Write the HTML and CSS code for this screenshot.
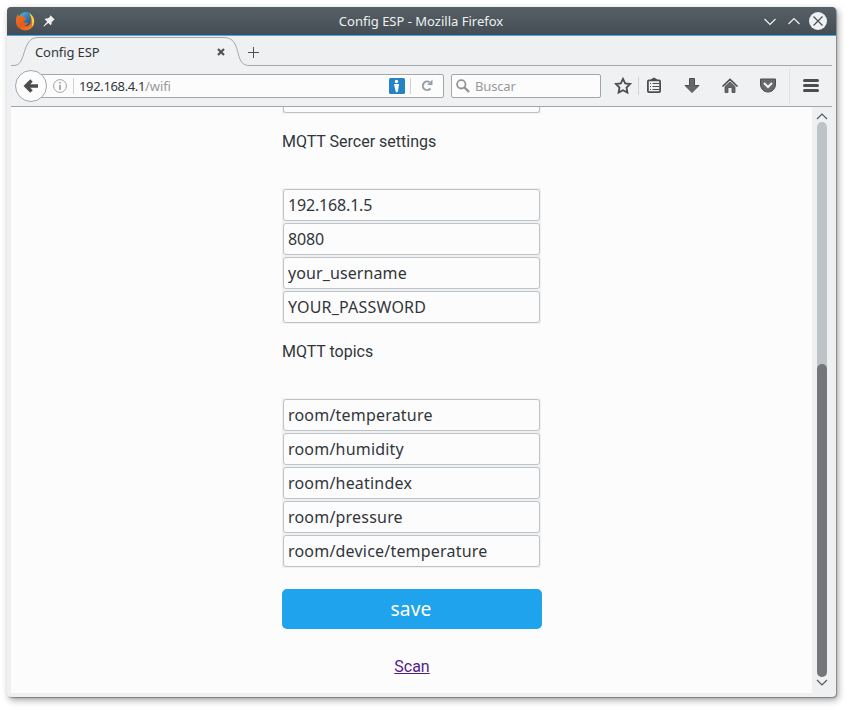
FILE: index.html
```html
<!DOCTYPE html>
<html lang="en">
<head>
<meta charset="utf-8">
<title>Config ESP</title>
<link rel="stylesheet" href="styles.css">
</head>
<body>
<div class="window">
  <header class="titlebar">
    <svg class="firefox" width="20" height="20" viewBox="0 0 20 20">
      <defs>
        <linearGradient id="fox" x1="0" y1="0" x2="1" y2="1"><stop offset="0" stop-color="#e77a25"/><stop offset=".5" stop-color="#e9581c"/><stop offset="1" stop-color="#ee8b20"/></linearGradient>
        <linearGradient id="globe" x1="0" y1="0" x2="1" y2="1"><stop offset="0" stop-color="#52bde9"/><stop offset="1" stop-color="#153568"/></linearGradient>
      </defs>
      <circle cx="11" cy="9.2" r="8.2" fill="url(#globe)"/>
      <path d="M2.5 3.2 4.2 5.6Q5.5 4.6 7 5L9 4.3 8.8 6.5 11 7.6 10.6 8.8 8.4 9.7Q8.6 12 11 12.1L13.5 11.7Q12 14.5 9.2 14.3 13.5 16.8 15.6 12 16.8 8 14.7 3.2 19.8 6.5 19.2 11.4 18.1 18.8 10.3 19.4 2.5 19.2 1 12 .4 7 2.5 3.2Z" fill="url(#fox)"/>
      <path d="M14.4 2.2Q19.5 5.2 19.2 10.8 18.8 14.2 16.8 16.2 18.2 9 14.4 2.2Z" fill="#fbcf3d"/>
    </svg>
    <svg class="pin" width="12" height="12" viewBox="0 0 12 12"><path d="M7.500.3 11.700 4.500 10.500 5.300 8.600 7.200Q9 9.200 7.900 10.300L5.300 7.900 1 11.600.4 11 4.200 6.800 1.700 4.300Q3 3 4.800 3.400L6.900 1.700Z" fill="#eff0f1"/></svg>
    <span class="title">Config ESP - Mozilla Firefox</span>
    <svg class="controls" width="64" height="20" viewBox="0 0 64 20" fill="none" stroke="#eff0f1" stroke-width="1.2">
      <path d="M.5 8 6 13.500 11.500 8M24.500 13 30 7.500 35.500 13"/>
      <circle cx="54" cy="10" r="9" fill="#eff0f1" stroke="none"/>
      <path d="M49.500 5.500 58.500 14.500M58.500 5.500 49.500 14.500" stroke="#475057"/>
    </svg>
  </header>
  <div class="tabs">
    <svg class="tab-shape" width="821" height="30" viewBox="0 0 821 30">
      <path d="M0 29.500H3C16 29.500 10 1.500 27 1.500H213C232 1.500 222 29.500 238 29.500H821V30H0Z" fill="#f0f1f3"/>
      <path d="M0 29.500H3C16 29.500 10 1.500 27 1.500H213C232 1.500 222 29.500 238 29.500H821" fill="none" stroke="#a3a7aa"/>
    </svg>
    <span class="tab-name">Config ESP</span>
    <svg class="tab-close" width="8" height="8" viewBox="0 0 8 8"><path d="M1 1 7 7M7 1 1 7" stroke="#505356" stroke-width="2.200"/></svg>
    <svg class="tab-new" width="11" height="11" viewBox="0 0 11 11"><path d="M5.500 0V11M0 5.500H11" stroke="#4d5053"/></svg>
  </div>
  <nav class="toolbar">
    <div class="back"><svg width="16" height="16" viewBox="0 0 16 16"><path d="M8.500 2.500 3 8 8.500 13.500M3.500 8H15" fill="none" stroke="#4d4d4d" stroke-width="3.500"/></svg></div>
    <div class="address">
      <svg class="info" width="14" height="14" viewBox="0 0 14 14"><circle cx="7" cy="7" r="6.400" fill="none" stroke="#a3a3a3"/><path d="M6.200 3h1.600v1.600H6.200ZM6.200 6h1.600v5H6.200Z" fill="#999"/></svg>
      <i class="divider"></i>
      <span class="url">192.168.4.1<span>/wifi</span></span>
      <svg class="badge" width="16" height="16" viewBox="0 0 16 16"><rect width="16" height="16" rx="1.500" fill="#2582c5"/><circle cx="7.500" cy="3.500" r="1.700" fill="#fff"/><path d="M5 6H10L9 13.500 7.500 14.500 6.500 13Z" fill="#fff"/></svg>
      <i class="divider reload-divider"></i>
      <svg class="reload" width="12" height="13" viewBox="0 0 12 13"><path d="M8.500 3.200A4.300 4.300 0 1 0 9.500 9.500" fill="none" stroke="#96a0a9" stroke-width="2"/><path d="M11.500.5V6H6Z" fill="#96a0a9"/></svg>
    </div>
    <div class="search">
      <svg width="14" height="14" viewBox="0 0 14 14" fill="none" stroke="#949494"><circle cx="5.300" cy="5.300" r="4.200" stroke-width="1.800"/><path d="M8.500 8.500 13 13" stroke-width="2.400"/></svg>
      <span>Buscar</span>
    </div>
    <svg class="tools" width="231" height="38" viewBox="0 0 231 38">
      <path d="M22 11.800 24.200 16.400 29.100 17 25.500 20.500 26.400 25.600 22 23.200 17.600 25.600 18.500 20.500 14.900 17 19.800 16.400Z" fill="none" stroke="#4d4d4d" stroke-width="1.800"/>
      <path d="M37.500 10V28" stroke="#d0d2d4"/>
      <path d="M50 13V12.300L53 10.500 56 12.300V13Z" fill="#4d4d4d"/><rect x="46.900" y="13.400" width="12.200" height="11.700" rx="1" fill="none" stroke="#4d4d4d" stroke-width="1.800"/><path d="M49 16.500H50M51.500 16.500H58M49 19.500H50M51.500 19.500H58M49 22.500H50M51.500 22.500H58" stroke="#4d4d4d" stroke-width="1.200"/>
      <path d="M88.500 11.500H93.500V18.500H98L91 25.500 84 18.500H88.500Z" fill="#686868" stroke="#4d4d4d"/>
      <path d="M121.500 19.500 129 12.500 136.500 19.500" fill="none" stroke="#4d4d4d" stroke-width="1.700"/><path d="M124 19.500 129 15 134 19.500V25.500H131V20.500H127V25.500H124Z" fill="#686868" stroke="#4d4d4d" stroke-width=".8"/>
      <path d="M159.500 12H174.500V17C174.500 22 171 25 167 25S159.500 22 159.500 17Z" fill="#686868" stroke="#4d4d4d"/><path d="M163 16 167 20 171 16" fill="none" stroke="#f4f4f4" stroke-width="2"/>
      <path d="M188.500 2V37" stroke="#dfe1e3"/>
      <path d="M203.500 13.500H216.500M203.500 18.500H216.500M203.500 23.500H216.500" stroke="#4d4d4d" stroke-width="3" stroke-linecap="round"/>
    </svg>
  </nav>
  <div class="viewport">
    <main class="page">
      <div class="clipped"><div></div></div>
      <h2>MQTT Sercer settings</h2>
      <div class="fields">
        <input class="numeric" value="192.168.1.5"><input class="numeric" value="8080"><input class="username" value="your_username"><input value="YOUR_PASSWORD">
      </div>
      <h2>MQTT topics</h2>
      <div class="fields">
        <input value="room/temperature"><input value="room/humidity"><input value="room/heatindex"><input value="room/pressure"><input value="room/device/temperature">
      </div>
      <button class="save">save</button>
      <a href="#">Scan</a>
    </main>
    <div class="scrollbar">
      <svg width="12" height="7" viewBox="0 0 12 7"><path d="M1 6 6 1 11 6" fill="none" stroke="#55585b" stroke-width="1.200"/></svg>
      <div class="track"><div class="thumb"></div></div>
      <svg width="12" height="7" viewBox="0 0 12 7"><path d="M1 1 6 6 11 1" fill="none" stroke="#55585b" stroke-width="1.200"/></svg>
    </div>
  </div>
</div>
</body>
</html>
```
FILE: styles.css
```css
* { box-sizing: border-box; }
body { margin: 0; padding: 7px; height: 710px; overflow: hidden; background: #fff; font-family: "Noto Sans", sans-serif; color: #31363b; }
svg { display: block; flex: none; }
.window { width: 829px; height: 690px; border-radius: 4px; background: #eff0f1; box-shadow: 1px 1px 1px rgba(0,0,0,.3), 2px 3px 7px rgba(0,0,0,.38); overflow: hidden; }
.titlebar { height: 29px; display: flex; align-items: center; padding: 0 8px 1px; background: linear-gradient(#566067, #444d53); border-bottom: 1px solid #3daee9; color: #eff0f1; }
.pin { margin-left: 8px; }
.title { flex: 1; text-align: center; font-size: 13px; line-height: 20px; padding-left: 23px; }
.tabs { position: relative; height: 30px; margin: 0 4px; display: flex; align-items: center; font-size: 13px; }
.tab-shape { position: absolute; left: 0; top: 0; }
.tab-name { position: relative; width: 182px; margin-left: 24px; padding-top: 2px; line-height: 20px; letter-spacing: -.1px; }
.tab-close { position: relative; margin: 2px 0 0; }
.tab-new { position: relative; margin: 3px 0 0 23px; }
.toolbar { height: 41px; margin: 0 4px; padding: 0 1px 1px 4px; display: flex; align-items: center; background: #f0f1f3; border-bottom: 1px solid #a3a7aa; }
.back { position: relative; z-index: 1; flex: none; width: 32px; height: 32px; border: 1px solid #a3a7aa; border-radius: 50%; background: #fcfcfc; display: flex; align-items: center; justify-content: center; }
.address { width: 403px; height: 24px; margin-left: -6px; padding-left: 11px; border: 1px solid #a3a7aa; border-radius: 0 2px 2px 0; background: #fcfcfc; display: flex; align-items: center; flex: none; }
.address .divider { width: 1px; height: 16px; margin: 0 5px 0 6px; background: #cfd1d2; }
.url { width: 310px; font-size: 13px; line-height: 20px; letter-spacing: -.35px; }
.url span { color: #999; letter-spacing: -.1px; }
.address .reload-divider { margin: 0 10px 0 5px; }
.search { width: 150px; height: 24px; margin-left: 7px; padding-left: 4px; border: 1px solid #a3a7aa; border-radius: 2px; background: #fcfcfc; display: flex; align-items: center; gap: 5px; flex: none; font-size: 13px; letter-spacing: -.15px; color: #999; }
.viewport { height: 586px; margin: 0 4px; display: flex; background: #fcfcfc; }
.page { width: 801px; padding-left: 271px; display: flex; flex-direction: column; align-items: flex-start; }
.clipped { width: 259px; height: 7px; padding: 0 1px 1px; background: #eff0f1; }
.clipped div { height: 6px; border: 1px solid #bdc3c7; border-top: 0; border-radius: 0 0 3px 3px; background: #fcfcfc; }
h2 { height: 74px; margin: 0; padding-top: 18px; font: 16px/20px Roboto, sans-serif; }
.fields { width: 259px; display: flex; flex-direction: column; background: #eff0f1; }
.fields input { width: 257px; height: 32px; margin: 1px; padding: 0 4px; border: 1px solid #bdc3c7; border-radius: 3px; background: #fcfcfc; font: 16px "Noto Sans", sans-serif; letter-spacing: .2px; color: #31363b; outline: 0; }
.fields .numeric { letter-spacing: -.17px; }
.fields .username { letter-spacing: .1px; }
.save { width: 260px; height: 40px; margin-top: 21px; padding: 0 2px 0 0; border: 0; border-radius: 5px; background: #1fa3ec; color: #fff; font: 19.200px/40px "Noto Sans", sans-serif; letter-spacing: .15px; }
.page a { width: 260px; margin-top: 28px; text-align: center; font: 16px/20px Roboto, sans-serif; color: #551a8b; }
.scrollbar { width: 20px; padding: 6px 0 7px; display: flex; flex-direction: column; align-items: center; gap: 2px; background: #eff0f1; }
.track { flex: 1; width: 10px; border-radius: 5px; background: #bdc3c7; display: flex; flex-direction: column; justify-content: flex-end; }
.thumb { height: 313px; border-radius: 5px; background: #75767a; }
```
